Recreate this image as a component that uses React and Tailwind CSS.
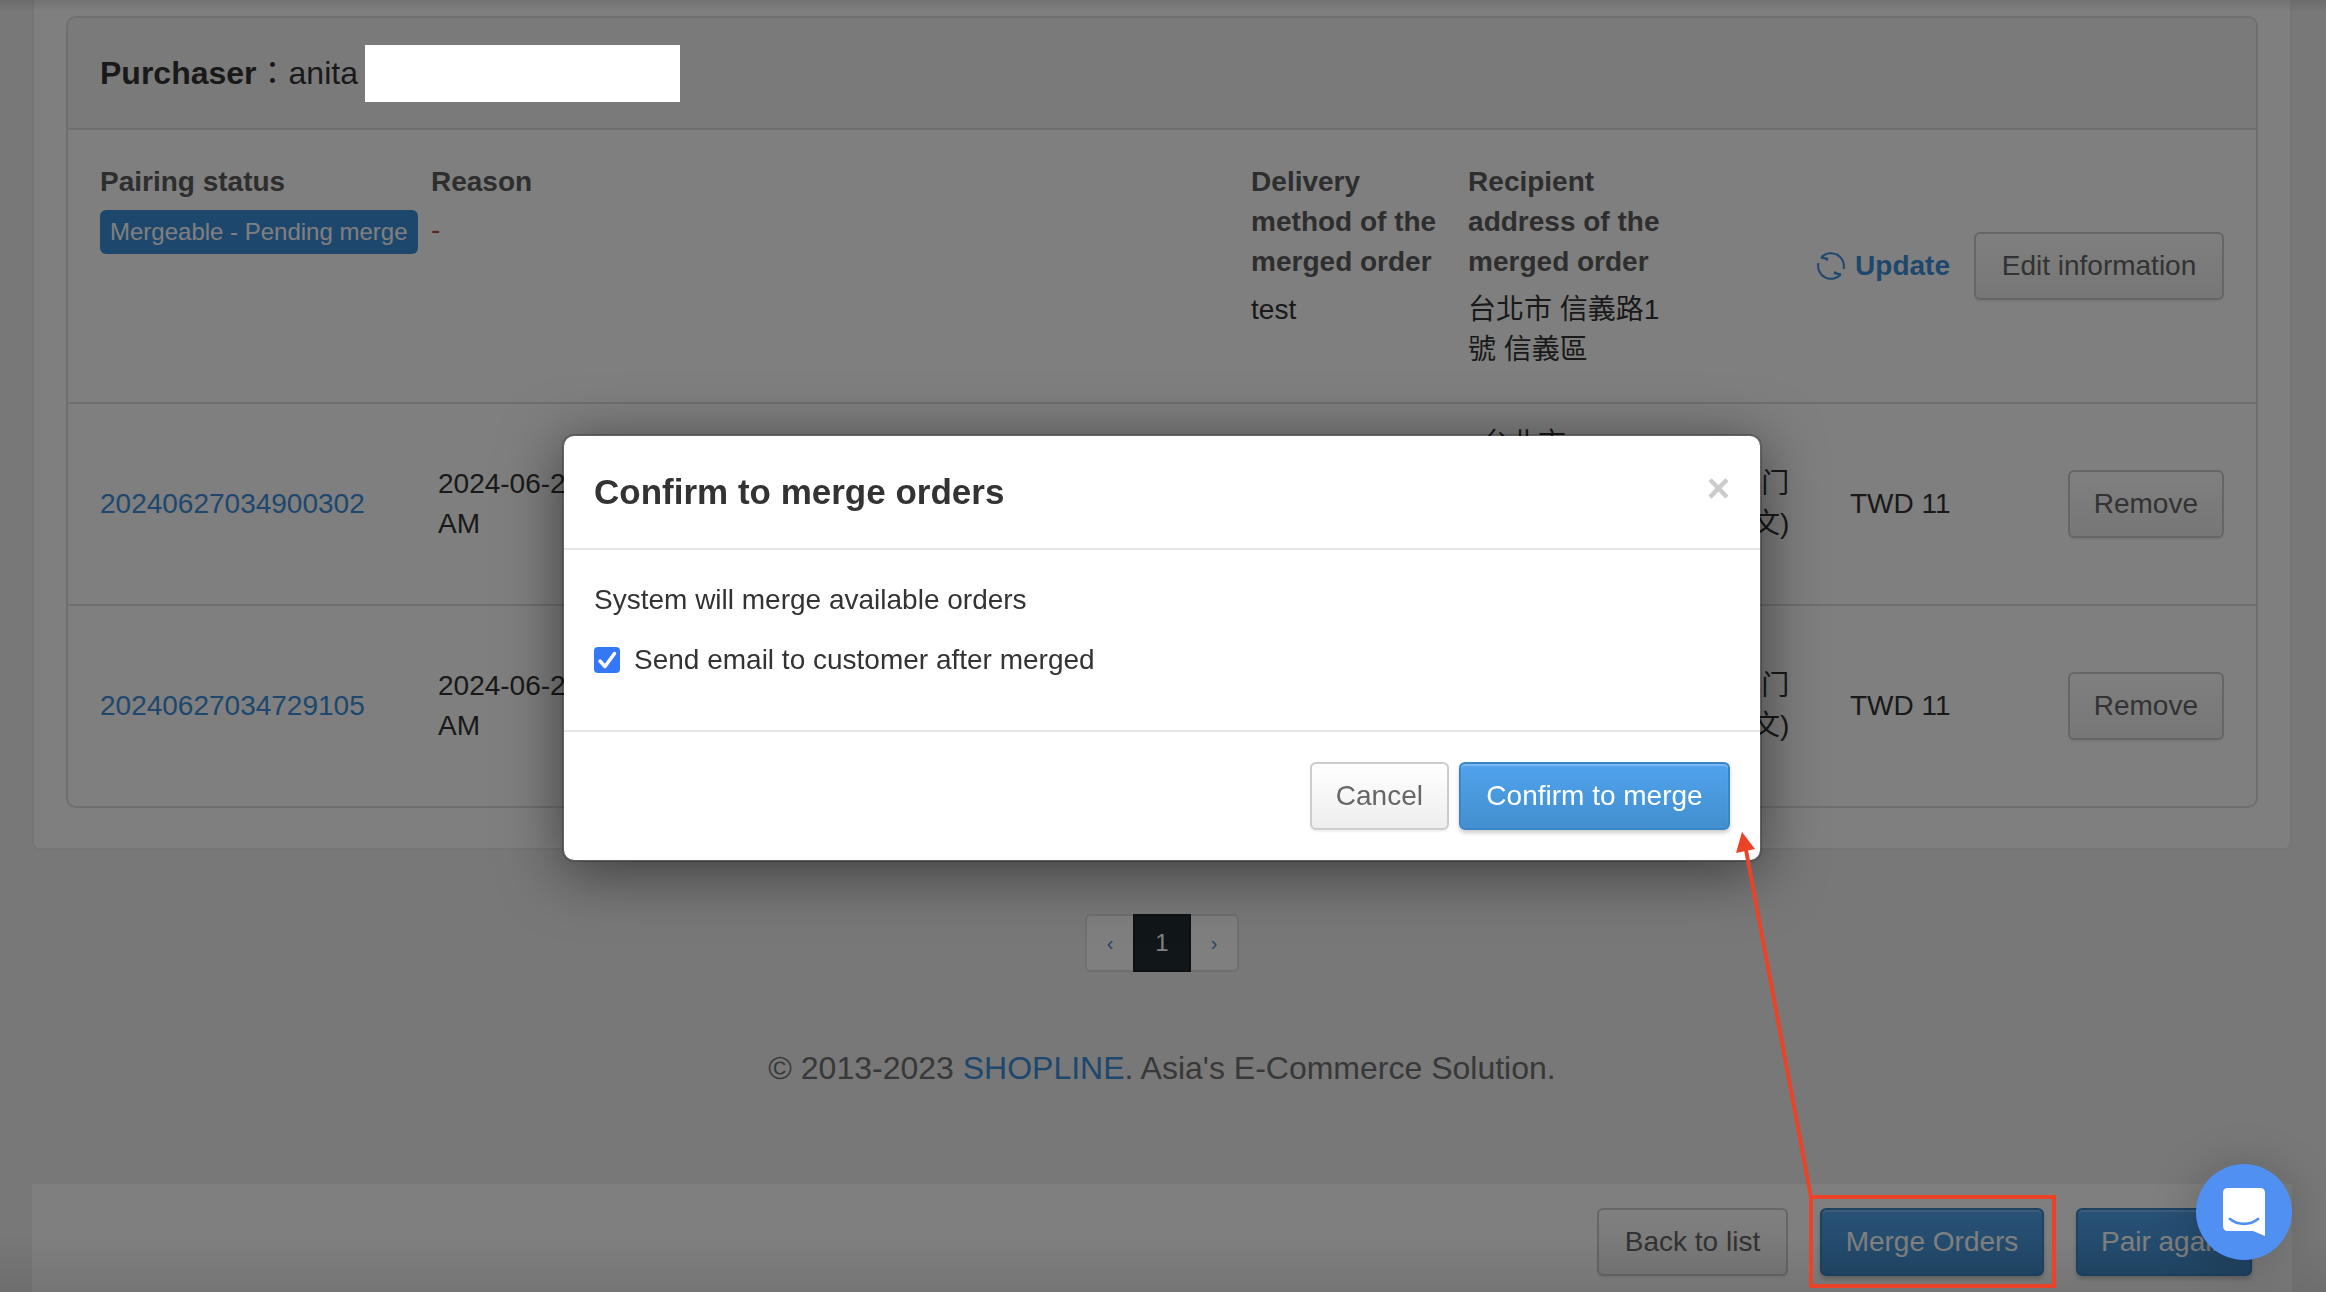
const orders = [
  { id: '20240627034900302', date: '2024-06-27 11:49', total: 'TWD 11' },
  { id: '20240627034729105', date: '2024-06-27 11:47', total: 'TWD 11' },
];

function Button({ primary = false, className = '', children }) {
  const tone = primary
    ? 'border-[#3a85c5] bg-linear-to-b from-[#50a3ed] to-[#438fcf] text-white shadow-[inset_0_2px_1px_rgba(255,255,255,0.25),0_3px_4px_rgba(0,0,0,0.2)]'
    : 'border-[#cccccc] bg-linear-to-b from-white to-[#eeeeee] text-[#666666] shadow-[0_2px_2px_rgba(0,0,0,0.06)]';
  return (
    <button type="button" className={`h-[68px] rounded-md border-2 whitespace-nowrap ${tone} ${className}`}>
      {children}
    </button>
  );
}

function RefreshIcon() {
  return (
    <svg className="size-7" viewBox="0 0 28 28" fill="none" stroke="currentColor" strokeWidth="2" aria-hidden="true">
      <path d="M4.500 5.200A13 13 0 0 1 26.600 17" />
      <path d="M3.800 5.300L10 6.800L9.600 8.600" strokeWidth="2.400" />
      <path d="M23.500 22.800A13 13 0 0 1 1.400 11" />
      <path d="M24.200 22.700L18 21.200L18.400 19.400" strokeWidth="2.400" />
    </svg>
  );
}

function OrderCard() {
  return (
    <section className="rounded-[10px] border-2 border-[#dedede]">
      <header className="flex h-[110px] items-center rounded-t-lg bg-[#f5f5f5] px-8 text-[32px] text-[#333333]">
        <p>
          <strong>Purchaser</strong>：anita
        </p>
        <span className="relative z-20 ml-[7px] h-[57px] w-[315px] bg-white" />
      </header>

      <div className="flex items-center justify-between border-t-2 border-[#dedede] p-8 pb-[33px]">
        <div className="flex flex-1 self-start">
          <div className="w-[331px]">
            <h3 className="font-bold text-[#5c5c5c]">Pairing status</h3>
            <span className="mt-2 inline-block h-11 rounded-md bg-[#3d8fdb] px-2.5 text-2xl leading-11 text-white">
              Mergeable - Pending merge
            </span>
          </div>
          <div className="min-w-0 flex-1">
            <h3 className="font-bold text-[#5c5c5c]">Reason</h3>
            <p className="mt-2 text-[#b94a48]">-</p>
          </div>
        </div>
        <div className="mr-[149px] flex h-[207px] gap-5 self-start">
          <div className="w-[197px]">
            <h3 className="font-bold text-[#5c5c5c]">Delivery method of the merged order</h3>
            <p className="mt-2 text-[#333333]">test</p>
          </div>
          <div className="w-[200px]">
            <h3 className="font-bold text-[#5c5c5c]">Recipient address of the merged order</h3>
            <p className="mt-2 text-[#333333]">
              台北市 信義路1
              <br />號 信義區
            </p>
          </div>
        </div>
        <div className="flex items-center gap-6">
          <button type="button" className="flex items-center gap-2.5 font-bold text-[#3d8fdb]">
            <RefreshIcon />
            Update
          </button>
          <Button className="w-[250px]">Edit information</Button>
        </div>
      </div>

      <table className="w-full table-fixed text-left text-[#333333]">
        <colgroup>
          <col className="w-[370px]" />
          <col />
          <col className="w-[242px]" />
          <col className="w-[126px]" />
          <col className="w-[180px]" />
          <col className="w-[226px]" />
        </colgroup>
        <tbody>
          {orders.map((order) => (
            <tr key={order.id} className="border-t-2 border-[#dedede]">
              <td className="py-5 pl-8">
                <a href="#order" className="text-[#3d8fdb]">
                  {order.id}
                </a>
              </td>
              <td className="py-5">
                {order.date}
                <br />
                AM
              </td>
              <td className="py-5">
                台北市
                <br />
                信義路1
                <br />
                號
                <br />
                信義區
              </td>
              <td className="py-5">
                (澳门
                <br />
                中文)
              </td>
              <td className="py-5">{order.total}</td>
              <td className="py-5 pr-8 text-right">
                <Button className="px-6">Remove</Button>
              </td>
            </tr>
          ))}
        </tbody>
      </table>
    </section>
  );
}

function Pagination() {
  return (
    <nav aria-label="Pages" className="mt-16 flex justify-center">
      <ul className="flex h-[58px] text-2xl leading-none">
        <li>
          <button type="button" aria-label="Previous" className="h-full w-12 rounded-l-md border-2 border-r-0 border-[#dedede] bg-white text-xl text-[#4a86d8]">
            ‹
          </button>
        </li>
        <li>
          <button type="button" aria-current="page" className="h-full w-[58px] border-2 border-[#1c2226] bg-[#222c32] text-white">
            1
          </button>
        </li>
        <li>
          <button type="button" aria-label="Next" className="h-full w-12 rounded-r-md border-2 border-l-0 border-[#dedede] bg-white text-xl text-[#4a86d8]">
            ›
          </button>
        </li>
      </ul>
    </nav>
  );
}

function MergeDialog() {
  return (
    <div className="fixed inset-0 z-30 flex items-start justify-center pt-[434px] pr-0.5">
      <div
        role="dialog"
        aria-labelledby="merge-title"
        className="w-full max-w-[1200px] rounded-xl border-2 border-black/20 bg-white bg-clip-padding text-[#333333] shadow-[0_10px_60px_rgba(0,0,0,0.5)]"
      >
        <header className="flex h-[114px] items-center justify-between border-b-2 border-[#e5e5e5] px-[30px]">
          <h2 id="merge-title" className="text-[35px] font-bold">
            Confirm to merge orders
          </h2>
          <button type="button" aria-label="Close" className="pb-2 text-[40px] leading-none font-bold text-[#cccccc]">
            ×
          </button>
        </header>
        <div className="border-b-2 border-[#e5e5e5] px-[30px] pt-[30px] pb-[50px]">
          <p>System will merge available orders</p>
          <div className="mt-5 flex items-center">
            <input id="send-email" type="checkbox" defaultChecked className="size-[26px] appearance-none rounded bg-[#3478f6]" />
            <svg className="pointer-events-none -ml-[26px] size-[26px]" viewBox="0 0 26 26" fill="none" stroke="white" strokeWidth="3.500" strokeLinecap="round" strokeLinejoin="round" aria-hidden="true">
              <path d="M6 14l5 5.500L20.500 6.500" />
            </svg>
            <label htmlFor="send-email" className="ml-3.5">
              Send email to customer after merged
            </label>
          </div>
        </div>
        <footer className="flex justify-end gap-2.5 p-[30px]">
          <Button className="px-6">Cancel</Button>
          <Button primary className="w-[271px]">
            Confirm to merge
          </Button>
        </footer>
      </div>
    </div>
  );
}

function Annotation() {
  return (
    <svg className="pointer-events-none fixed right-[270px] bottom-0 z-40 h-[464px] w-[326px]" viewBox="0 0 326 464" fill="none" stroke="#ea4328" strokeWidth="4" aria-hidden="true">
      <rect x="81" y="369" width="243" height="89" />
      <path d="M81 369L16 22" />
      <path d="M12 4L6 25L25 21Z" fill="#ea4328" stroke="none" />
    </svg>
  );
}

function ChatLauncher() {
  return (
    <button
      type="button"
      aria-label="Open chat"
      className="fixed right-[34px] bottom-8 z-50 flex size-24 items-center justify-center rounded-full bg-[#5190f3] shadow-[0_4px_48px_rgba(0,0,0,0.22)]"
    >
      <svg className="h-12 w-[42px]" viewBox="0 0 42 48" aria-hidden="true">
        <path d="M5 0H37Q42 0 42 5V48L30 43H5Q0 43 0 38V5Q0 0 5 0Z" fill="white" />
        <path d="M7 31C15 37.500 27 37.500 35 31" fill="none" stroke="#5190f3" strokeWidth="2.800" strokeLinecap="round" />
      </svg>
    </button>
  );
}

export default function App() {
  return (
    <div className="relative flex min-h-screen flex-col bg-[#f0f0f0] pr-[34px] pl-8 font-['Liberation_Sans','Noto_Sans_CJK_TC',sans-serif] text-[28px] leading-10">
      <main>
        <div className="rounded-b-lg border-2 border-t-0 border-[#ebebeb] bg-white px-8 pt-4 pb-10">
          <OrderCard />
        </div>
        <Pagination />
      </main>
      <p className="mt-[76px] text-center text-[32px] text-[#707070]">
        © 2013-2023{' '}
        <a href="#shopline" className="text-[#3d8fdb]">
          SHOPLINE
        </a>
        . Asia's E-Commerce Solution.
      </p>
      <div className="mt-auto flex justify-end gap-8 bg-white px-10 pt-6 pb-4">
        <Button className="w-[191px]">Back to list</Button>
        <Button primary className="w-56">
          Merge Orders
        </Button>
        <Button primary className="w-44">
          Pair again
        </Button>
      </div>

      <div className="pointer-events-none fixed inset-x-0 top-0 z-10 h-3 bg-linear-to-b from-black/10 to-transparent" />
      <div className="pointer-events-none fixed inset-x-0 bottom-0 z-10 h-14 bg-linear-to-b from-transparent to-black/8" />
      <div className="fixed inset-0 z-10 bg-black/50" />
      <MergeDialog />
      <Annotation />
      <ChatLauncher />
    </div>
  );
}
